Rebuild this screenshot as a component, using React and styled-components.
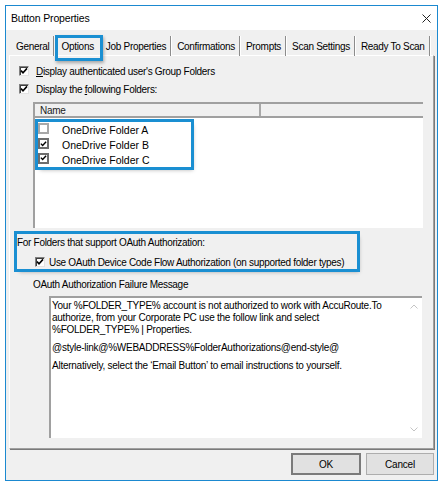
import React from "react";
import styled, { createGlobalStyle } from "styled-components";

const GlobalStyle = createGlobalStyle`
  html, body { margin: 0; padding: 0; background: #ffffff; }
  body {
    font-family: "Liberation Sans", Arial, sans-serif;
    color: #000;
    -webkit-font-smoothing: antialiased;
  }
`;

const ACCENT = "#1a8fd2";

const Window = styled.div`
  box-sizing: border-box;
  margin: 5px 0 0 5px;
  width: 433px;
  height: 476px;
  border: 1px solid #1b89d0;
  background: #f0f0f0;
  display: flex;
  flex-direction: column;
`;

const TitleBar = styled.div`
  flex: none;
  height: 24px;
  background: #ffffff;
  display: flex;
  align-items: center;
  justify-content: space-between;
  padding: 0 6px 0 5px;
`;

const Title = styled.span`
  font-size: 10.5px;
  letter-spacing: -0.15px;
`;

const CloseButton = styled.span`
  display: flex;
  width: 10px;
  height: 10px;
  align-items: center;
  justify-content: center;
`;

const Body = styled.div`
  flex: 1;
  display: flex;
  flex-direction: column;
  padding: 6px 3px 5px 3px;
  min-height: 0;
`;

const TabStrip = styled.div`
  flex: none;
  display: flex;
  height: 19px;
  padding-left: 1px;
  font-size: 10px;
  letter-spacing: -0.3px;
`;

const Tab = styled.div`
  position: relative;
  display: flex;
  align-items: center;
  height: 100%;
  padding: 1px ${(p) => (p.$active ? "6px" : "4px")} 0
    ${(p) => (p.$active ? "7px" : "6px")};
  border-right: ${(p) => (p.$active ? "none" : "1px solid #8c8c8c")};
  box-shadow: ${(p) => (p.$active ? "none" : "1px 0 0 #ffffff")};
  ${(p) =>
    p.$active &&
    `
    &::after {
      content: "";
      position: absolute;
      left: 1px;
      right: -3px;
      top: -1px;
      bottom: -5px;
      border: 3px solid ${ACCENT};
      box-shadow: 1px 2px 3px rgba(0, 0, 0, 0.3);
    }
  `}
`;

const Panel = styled.div`
  flex: 1;
  display: flex;
  flex-direction: column;
  border-top: 1px solid #ffffff;
  border-left: 1px solid #ffffff;
  border-right: 1px solid #a0a0a0;
  border-bottom: 1px solid #a0a0a0;
  box-shadow: 1px 1px 0 #7a7a7a;
  padding: 8px 0 0 0;
  font-size: 10px;
  letter-spacing: -0.3px;
`;

const CheckRow = styled.label`
  display: flex;
  align-items: center;
  height: 14px;
  gap: ${(p) => p.$gap}px;
  margin-left: ${(p) => p.$indent}px;
  margin-top: ${(p) => p.$top || 0}px;
`;

const Box = styled.span`
  box-sizing: border-box;
  flex: none;
  width: 10px;
  height: 10px;
  background: #ffffff;
  border: 1px solid;
  border-color: #808080 #e3e3e3 #e3e3e3 #808080;
  box-shadow: inset 1px 1px 0 #404040;
  display: flex;
  align-items: center;
  justify-content: center;
`;

const ListBox = styled.span`
  box-sizing: border-box;
  flex: none;
  width: 11px;
  height: 11px;
  background: #ffffff;
  border: 2px solid ${(p) => (p.$checked ? "#6e6e6e" : "#a8a8a8")};
  display: flex;
  align-items: center;
  justify-content: center;
  margin-top: -3px;
`;

const Underline = styled.span`
  text-decoration: underline;
  text-underline-offset: 1px;
`;

const ListView = styled.div`
  box-sizing: border-box;
  margin: 6px 0 0 23px;
  width: 390px;
  height: 126px;
  background: #ffffff;
  border-top: 2px solid #a0a0a0;
  border-left: 2px solid #a0a0a0;
  display: flex;
  flex-direction: column;
`;

const ListHeader = styled.div`
  flex: none;
  display: flex;
  height: 12px;
  background: #f0f0f0;
  border-bottom: 2px solid #a0a0a0;
`;

const HeaderCell = styled.div`
  display: flex;
  align-items: center;
  padding-left: 5px;
  width: ${(p) => p.$width}px;
  flex: ${(p) => (p.$width ? "none" : "1")};
  border-right: ${(p) => (p.$width ? "2px solid #a8a8a8" : "none")};
  color: #222;
  font-size: 10px;
`;

const RowGroup = styled.div`
  margin: 4px 0 0 3px;
  width: 153px;
  outline: 3px solid ${ACCENT};
  box-shadow: 2px 3px 4px rgba(0, 0, 0, 0.3);
  display: flex;
  flex-direction: column;
  padding-top: 1px;
  box-sizing: border-box;
  height: 45px;
`;

const ListRow = styled.div`
  display: flex;
  align-items: center;
  height: 15px;
  gap: 13px;
  font-size: 10.5px;
  letter-spacing: 0;
  color: #000;
`;

const OAuthGroup = styled.div`
  box-sizing: border-box;
  margin: 6px 0 0 7px;
  width: 340px;
  padding-top: 1px;
  outline: 3px solid ${ACCENT};
  box-shadow: 2px 3px 4px rgba(0, 0, 0, 0.3);
  display: flex;
  flex-direction: column;
  gap: 6px;
`;

const Line = styled.div`
  height: 14px;
  display: flex;
  align-items: center;
  margin-left: ${(p) => p.$indent || 0}px;
  margin-top: ${(p) => p.$top || 0}px;
`;

const MessageBox = styled.div`
  box-sizing: border-box;
  margin: 5px 0 0 39px;
  width: 373px;
  height: 142px;
  background: #ffffff;
  border-top: 2px solid #a0a0a0;
  border-left: 2px solid #a0a0a0;
  display: flex;
`;

const MessageText = styled.div`
  flex: 1;
  padding: 2px 0 0 1px;
  font-size: 10px;
  letter-spacing: -0.25px;
  line-height: 12px;
  white-space: nowrap;
  overflow: hidden;
`;

const Para = styled.p`
  margin: 0 0 6px 0;
`;

const ScrollTrack = styled.div`
  flex: none;
  width: 17px;
  display: flex;
  flex-direction: column;
  justify-content: space-between;
  align-items: center;
  padding: 6px 0 6px;
`;

const ButtonRow = styled.div`
  flex: none;
  display: flex;
  justify-content: flex-end;
  gap: 5px;
  margin-top: 4px;
  padding-right: 0;
`;

const Button = styled.button`
  box-sizing: border-box;
  width: ${(p) => p.$width}px;
  height: 22px;
  background: #e1e1e1;
  border: ${(p) => (p.$default ? "2px solid #7a7a7a" : "1px solid #adadad")};
  font-family: "Liberation Sans", Arial, sans-serif;
  font-size: 10px;
  letter-spacing: -0.2px;
  color: #000;
  padding: 0;
`;

const Check = () => (
  <svg width="8" height="8" viewBox="0 0 8 8">
    <path d="M1 3.6 L3 5.8 L7 1.4" fill="none" stroke="#000" strokeWidth="1.6" />
  </svg>
);

const Chevron = ({ up }) => (
  <svg width="8" height="5" viewBox="0 0 8 5">
    <path
      d={up ? "M0.5 4.5 L4 1 L7.5 4.5" : "M0.5 0.5 L4 4 L7.5 0.5"}
      fill="none"
      stroke="#c4c4c4"
      strokeWidth="1"
    />
  </svg>
);

const tabs = [
  "General",
  "Options",
  "Job Properties",
  "Confirmations",
  "Prompts",
  "Scan Settings",
  "Ready To Scan",
];

const folders = [
  { name: "OneDrive Folder A", checked: false },
  { name: "OneDrive Folder B", checked: true },
  { name: "OneDrive Folder C", checked: true },
];

export default function App() {
  return (
    <>
      <GlobalStyle />
      <Window>
        <TitleBar>
          <Title>Button Properties</Title>
          <CloseButton>
            <svg width="9" height="9" viewBox="0 0 9 9">
              <path d="M0.5 0.5 L8.5 8.5 M8.5 0.5 L0.5 8.5" stroke="#222" strokeWidth="1" />
            </svg>
          </CloseButton>
        </TitleBar>
        <Body>
          <TabStrip>
            {tabs.map((t) => (
              <Tab key={t} $active={t === "Options"}>
                {t}
              </Tab>
            ))}
          </TabStrip>
          <Panel>
            <CheckRow $indent={9} $gap={7}>
              <Box>
                <Check />
              </Box>
              <span>
                <Underline>D</Underline>isplay authenticated user's Group Folders
              </span>
            </CheckRow>
            <CheckRow $indent={9} $gap={7} $top={4}>
              <Box>
                <Check />
              </Box>
              <span>
                Display the <Underline>f</Underline>ollowing Folders:
              </span>
            </CheckRow>
            <ListView>
              <ListHeader>
                <HeaderCell $width={219}>Name</HeaderCell>
                <HeaderCell />
              </ListHeader>
              <RowGroup>
                {folders.map((f) => (
                  <ListRow key={f.name}>
                    <ListBox $checked={f.checked}>{f.checked && <Check />}</ListBox>
                    <span>{f.name}</span>
                  </ListRow>
                ))}
              </RowGroup>
            </ListView>
            <OAuthGroup>
              <Line>For Folders that support OAuth Authorization:</Line>
              <CheckRow $indent={18} $gap={4}>
                <Box>
                  <Check />
                </Box>
                <span>Use OAuth Device Code Flow Authorization (on supported folder types)</span>
              </CheckRow>
            </OAuthGroup>
            <Line $indent={23} $top={8}>
              OAuth Authorization Failure Message
            </Line>
            <MessageBox>
              <MessageText>
                <Para>
                  Your %FOLDER_TYPE% account is not authorized to work with AccuRoute.To
                  <br />
                  authorize, from your Corporate PC use the follow link and select
                  <br />
                  %FOLDER_TYPE% | Properties.
                </Para>
                <Para>@style-link@%WEBADDRESS%FolderAuthorizations@end-style@</Para>
                <Para>
                  Alternatively, select the ‘Email Button’ to email instructions to yourself.
                </Para>
              </MessageText>
              <ScrollTrack>
                <Chevron up />
                <Chevron />
              </ScrollTrack>
            </MessageBox>
          </Panel>
          <ButtonRow>
            <Button $width={70} $default>
              OK
            </Button>
            <Button $width={68}>Cancel</Button>
          </ButtonRow>
        </Body>
      </Window>
    </>
  );
}
